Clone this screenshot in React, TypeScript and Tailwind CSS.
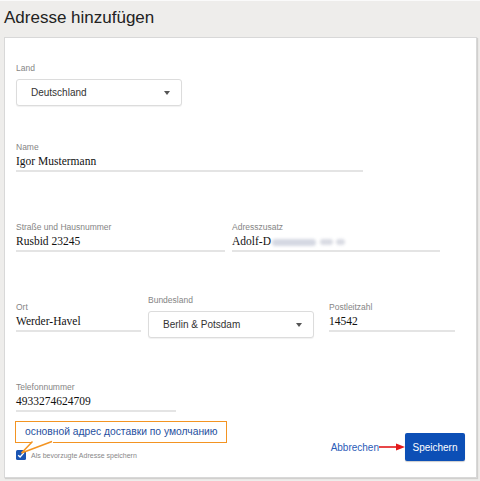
import React from 'react';

const labelCls = "text-[8.5px] leading-[12px] text-[#858585]";
const valueCls = "font-['Liberation_Serif','Times_New_Roman',serif] text-[11.5px] leading-[17px] text-[#111]";

function Field({ label, value, width, children }: { label: string; value?: string; width: string; children?: React.ReactNode }) {
  return (
    <div className={`${width} border-b-2 border-[#e4e4e4]`}>
      <div className={labelCls}>{label}</div>
      <div className={valueCls}>{children ?? value}</div>
    </div>
  );
}

function Select({ value, width }: { value: string; width: string }) {
  return (
    <div
      className={`${width} h-[27px] flex items-center justify-between pl-[14px] pr-[11px] border border-[#dcdcdc] rounded-[3px] bg-white shadow-[0_1px_1px_rgba(0,0,0,0.06)]`}
    >
      <span className="text-[10px] text-[#333]">{value}</span>
      <span className="w-0 h-0 border-l-[3px] border-r-[3px] border-t-[4px] border-l-transparent border-r-transparent border-t-[#555]" />
    </div>
  );
}

export default function App() {
  return (
    <div className="w-[480px] h-[481px] overflow-hidden bg-[#eeedeb] border-t border-[#fafafa] font-['Liberation_Sans',Arial,sans-serif]">
      <h1 className="pl-[4px] pt-[7px] text-[17px] leading-[20px] text-[#222]">Adresse hinzufügen</h1>

      <div className="ml-[4px] mt-[9px] w-[473px] h-[441px] bg-white border border-[#d8d8d8] shadow-[1px_1px_1px_rgba(0,0,0,0.12)] pl-[11px] pr-[11px] pt-[24px]">
        {/* Land */}
        <div className={labelCls}>Land</div>
        <div className="mt-[5px]">
          <Select value="Deutschland" width="w-[166px]" />
        </div>

        {/* Name */}
        <div className="mt-[35px]">
          <Field label="Name" value="Igor Mustermann" width="w-[347px]" />
        </div>

        {/* Straße / Adresszusatz */}
        <div className="mt-[49px] flex gap-[7px]">
          <Field label="Straße und Hausnummer" value="Rusbid 23245" width="w-[209px]" />
          <Field label="Adresszusatz" width="w-[208px]">
            Adolf-D
            <span className="inline-block align-middle ml-[1px] w-[44px] h-[7px] rounded-full bg-[#d5d8e2] blur-[1.5px]" />
            <span className="inline-block align-middle ml-[4px] w-[13px] h-[6px] rounded-full bg-[#d9dbe3] blur-[1.5px]" />
            <span className="inline-block align-middle ml-[3px] w-[9px] h-[6px] rounded-full bg-[#d9dbe3] blur-[1.5px]" />
          </Field>
        </div>

        {/* Ort / Bundesland / PLZ */}
        <div className="mt-[42px] flex items-start">
          <div className="pt-[7px]">
            <Field label="Ort" value="Werder-Havel" width="w-[125px]" />
          </div>
          <div className="ml-[7px]">
            <div className={labelCls}>Bundesland</div>
            <div className="mt-[5px]">
              <Select value="Berlin & Potsdam" width="w-[166px]" />
            </div>
          </div>
          <div className="pt-[7px] ml-[15px]">
            <Field label="Postleitzahl" value="14542" width="w-[126px]" />
          </div>
        </div>

        {/* Telefon */}
        <div className="mt-[43px]">
          <Field label="Telefonnummer" value="4933274624709" width="w-[160px]" />
        </div>

        {/* Footer */}
        <div className="mt-[9px] flex justify-between items-start">
          <div>
            <div className="relative -ml-[1px] w-[212px] h-[22px] border-[1.5px] border-[#f39422] flex items-center pl-[9px]">
              <span className="text-[10.3px] text-[#1f4f9e] whitespace-nowrap">основной адрес доставки по умолчанию</span>
              <svg className="absolute left-0 top-0 overflow-visible" width="50" height="40">
                <rect x="17" y="18" width="20" height="3" fill="white" />
                <polyline points="16.5,19.5 5.5,31 36,19.5" fill="white" stroke="#f39422" strokeWidth="1.5" strokeLinejoin="miter" />
              </svg>
            </div>
            <div className="mt-[6px] flex items-center">
              <span className="w-[10px] h-[10px] rounded-[1.5px] bg-[#1a55b3] flex items-center justify-center">
                <svg width="8" height="8" viewBox="0 0 8 8">
                  <path d="M1.2 4.2 L3.1 6 L6.8 1.9" fill="none" stroke="white" strokeWidth="1.4" />
                </svg>
              </span>
              <span className="ml-[5px] mt-[2px] text-[7px] text-[#888]">Als bevorzugte Adresse speichern</span>
            </div>
          </div>

          <div className="mt-[12px] flex items-center">
            <span className="text-[10px] text-[#2b5cb8]">Abbrechen</span>
            <svg width="28" height="10" viewBox="0 0 28 10" className="mx-[-1px]">
              <line x1="1" y1="5" x2="20" y2="5" stroke="#e3191b" strokeWidth="1.6" />
              <path d="M18 1.5 L27 5 L18 8.5 Z" fill="#e3191b" />
            </svg>
            <button className="w-[60px] h-[28px] rounded-[2px] bg-[#0c4fb6] text-white text-[10px] shadow-[0_1px_1px_rgba(0,0,0,0.2)]">
              Speichern
            </button>
          </div>
        </div>
      </div>
    </div>
  );
}
